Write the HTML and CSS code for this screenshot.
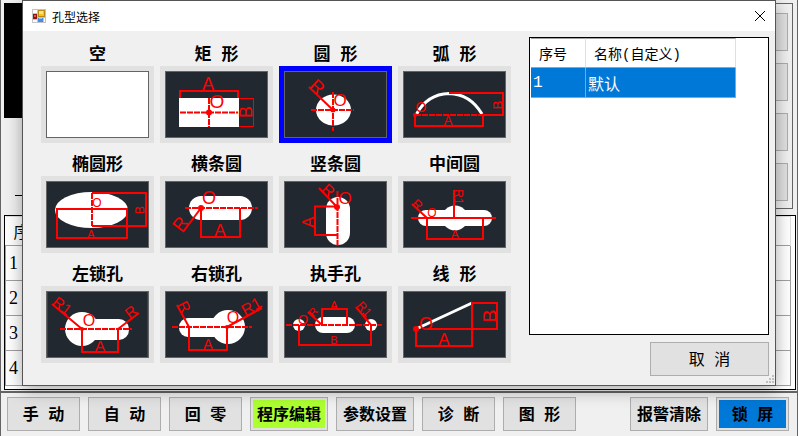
FILE: index.html
```html
<!DOCTYPE html>
<html lang="zh-CN">

<head>
    <meta charset="UTF-8">
    <meta name="viewport" content="width=device-width, initial-scale=1.0">
    <title>孔型选择</title>
    <link rel="stylesheet" href="styles.css">
</head>

<body>
    <div class="window">
        <div class="workspace">
            <div class="preview">
                <div class="canvas"></div>
                <div class="rule"></div>
            </div>
            <div class="side-panel">
                <button type="button"></button>
                <button type="button"></button>
                <button type="button"></button>
                <button type="button"></button>
            </div>
        </div>

        <div class="program">
            <table class="program-table">
                <thead>
                    <tr><th>序号</th><th></th></tr>
                </thead>
                <tbody>
                    <tr><td>1</td><td></td></tr>
                    <tr><td>2</td><td></td></tr>
                    <tr><td>3</td><td></td></tr>
                    <tr><td>4</td><td></td></tr>
                </tbody>
            </table>
        </div>

        <div class="toolbar">
            <button type="button">手 动</button>
            <button type="button">自 动</button>
            <button type="button">回 零</button>
            <button type="button" class="wide active">程序编辑</button>
            <button type="button" class="wide">参数设置</button>
            <button type="button">诊 断</button>
            <button type="button">图 形</button>
            <button type="button" class="wide push">报警清除</button>
            <button type="button" class="lock">锁 屏</button>
        </div>
    </div>

    <div class="dialog" role="dialog" aria-labelledby="dialog-title">
        <div class="titlebar">
            <svg class="app-icon" width="14" height="14" viewBox="0 0 14 14">
                <rect width="14" height="14" fill="#c4c4c4" />
                <path d="M1 1h4v3H1zM1 11h4v2H1zM12 9h1v4h-1z" fill="#fff" />
                <rect x="6" y="1" width="7" height="7" fill="#b98a12" />
                <rect x="7" y="2" width="5" height="5" fill="#f5c22b" />
                <rect x="7" y="2" width="4" height="3" fill="#ffe385" />
                <rect x="1" y="5" width="4" height="5" fill="#8c1710" />
                <rect x="2" y="6" width="2" height="2" fill="#e0574a" />
                <rect x="6" y="9" width="5" height="4" fill="#4c8ae0" />
                <rect x="7" y="9" width="3" height="1" fill="#9cc3f7" />
            </svg>
            <span id="dialog-title">孔型选择</span>
            <button type="button" class="close" aria-label="关闭">
                <svg width="12" height="12" viewBox="0 0 12 12">
                    <path d="M1 1l10 10M11 1L1 11" fill="none" stroke="#000" />
                </svg>
            </button>
        </div>

        <div class="dialog-body">
            <div class="shapes">
                <div class="shape">
                    <span id="shape-none">空</span>
                    <button type="button" class="blank" aria-labelledby="shape-none">
                        <svg viewBox="0 0 103 67"></svg>
                    </button>
                </div>

                <div class="shape">
                    <span id="shape-rect">矩 形</span>
                    <button type="button" aria-labelledby="shape-rect">
                        <svg viewBox="0 0 103 67">
                            <rect class="hole" x="14" y="27" width="60" height="29" />
                            <path class="dim" d="M15 27V20H73V27" />
                            <path class="dim thin" d="M74 27.500H88.500V55.500H74" />
                            <path class="axis" d="M15 41.500H73M44 27V56" />
                            <circle class="dot" cx="44" cy="41.500" r="3" />
                            <text font-size="18" x="43" y="19">A</text>
                            <text font-size="19" x="52" y="37">O</text>
                            <text font-size="18" transform="translate(81 41) rotate(-90)" y="6">B</text>
                        </svg>
                    </button>
                </div>

                <div class="shape">
                    <span id="shape-circle">圆 形</span>
                    <button type="button" class="selected" aria-labelledby="shape-circle">
                        <svg viewBox="0 0 103 67">
                            <ellipse class="hole" cx="49.500" cy="39" rx="17.500" ry="15.500" />
                            <path class="dim" d="M25 16L49 39" />
                            <path class="axis" d="M27 39H70M49 21V60" />
                            <circle class="dot" cx="49" cy="39" r="2.500" />
                            <text font-size="18" transform="translate(33 16) rotate(43)" y="6">R</text>
                            <text font-size="17" x="56" y="35">O</text>
                        </svg>
                    </button>
                </div>

                <div class="shape">
                    <span id="shape-arc">弧 形</span>
                    <button type="button" aria-labelledby="shape-arc">
                        <svg viewBox="0 0 103 67">
                            <path class="stroke" d="M13 44Q24 23 46 22.500Q67 23 79 43" />
                            <path class="dim" d="M46 22H100V44H79M12 44V55H80V44" />
                            <path class="axis" d="M12 44H80" />
                            <circle class="dot" cx="12" cy="44" r="2" />
                            <text font-size="13" x="45" y="54">A</text>
                            <text font-size="14" x="18" y="41">O</text>
                            <text font-size="13" transform="translate(94 34) rotate(-90)" y="5">B</text>
                        </svg>
                    </button>
                </div>

                <div class="shape">
                    <span id="shape-ellipse">椭圆形</span>
                    <button type="button" aria-labelledby="shape-ellipse">
                        <svg viewBox="0 0 103 67">
                            <ellipse class="hole" cx="45.500" cy="29" rx="36.500" ry="18" />
                            <path class="dim" d="M11 28V57H81V28ZM46 12H100V45H46" />
                            <path class="axis" d="M46 12V45" />
                            <text font-size="11" x="45" y="57">A</text>
                            <text font-size="12" x="51" y="26">O</text>
                            <text font-size="12" transform="translate(94 29) rotate(-90)" y="4">B</text>
                        </svg>
                    </button>
                </div>

                <div class="shape">
                    <span id="shape-slot-h">横条圆</span>
                    <button type="button" aria-labelledby="shape-slot-h">
                        <svg viewBox="0 0 103 67">
                            <rect class="hole" x="24" y="15" width="63" height="24" rx="12" />
                            <path class="dim" d="M36 27V56H75V27M36 27L18 51" />
                            <path class="axis" d="M20 27H93" />
                            <circle class="dot" cx="36" cy="27" r="3" />
                            <text font-size="17" x="55" y="55">A</text>
                            <text font-size="18" x="44" y="23">O</text>
                            <text font-size="18" transform="translate(15 43) rotate(-53)" y="6">R</text>
                        </svg>
                    </button>
                </div>

                <div class="shape">
                    <span id="shape-slot-v">竖条圆</span>
                    <button type="button" aria-labelledby="shape-slot-v">
                        <svg viewBox="0 0 103 67">
                            <rect class="hole" x="42" y="16" width="24" height="48" rx="12" />
                            <path class="dim" d="M53 25.500H31V54H53M35 7L53 26" />
                            <path class="axis" d="M53.500 10V66" />
                            <circle class="dot" cx="53" cy="26" r="3" />
                            <text font-size="16" transform="translate(44 10) rotate(42)" y="5">R</text>
                            <text font-size="17" x="61" y="23">O</text>
                            <text font-size="17" transform="translate(24 41) rotate(-90)" y="6">A</text>
                        </svg>
                    </button>
                </div>

                <div class="shape">
                    <span id="shape-mid">中间圆</span>
                    <button type="button" aria-labelledby="shape-mid">
                        <svg viewBox="0 0 103 67">
                            <rect class="hole" x="15" y="29" width="74" height="16" rx="8" />
                            <ellipse class="hole" cx="52" cy="37" rx="13" ry="12.500" />
                            <path class="dim" d="M24 37V58H80V37M9 23L24 37M51 9V37M8 37H93" />
                            <text font-size="11" x="52" y="57">A</text>
                            <text font-size="12" x="29" y="36">O</text>
                            <text font-size="13" transform="translate(14 24) rotate(43)" y="4">R</text>
                            <text font-size="12" transform="translate(55 16) rotate(90)" y="4">R1</text>
                        </svg>
                    </button>
                </div>

                <div class="shape">
                    <span id="shape-lock-l">左锁孔</span>
                    <button type="button" aria-labelledby="shape-lock-l">
                        <svg viewBox="0 0 103 67">
                            <path class="edge" d="M1.500 1V66M101.500 1V66" />
                            <circle class="hole" cx="36" cy="38" r="17" />
                            <rect class="hole" x="36" y="28" width="47" height="21" rx="10" />
                            <path class="dim" d="M36 38V61H72V38M6 13L36 38M72 38L93 22" />
                            <path class="axis" d="M14 38H86" />
                            <circle class="dot" cx="36" cy="38" r="2" />
                            <text font-size="15" x="54" y="60">A</text>
                            <text font-size="16" x="43" y="35">O</text>
                            <text font-size="15" transform="translate(16 15) rotate(38)" y="5">R1</text>
                            <text font-size="15" transform="translate(85 21) rotate(-38)" y="5">R</text>
                        </svg>
                    </button>
                </div>

                <div class="shape">
                    <span id="shape-lock-r">右锁孔</span>
                    <button type="button" aria-labelledby="shape-lock-r">
                        <svg viewBox="0 0 103 67">
                            <rect class="hole" x="14" y="27" width="48" height="19" rx="9" />
                            <circle class="hole" cx="63" cy="36" r="17" />
                            <path class="dim" d="M24 36V59H62V36M12 14L24 36M62 36L97 17" />
                            <path class="axis" d="M7 36H87" />
                            <circle class="dot" cx="62" cy="36" r="2" />
                            <text font-size="14" x="43" y="58">A</text>
                            <text font-size="16" x="68" y="32">O</text>
                            <text font-size="15" transform="translate(19 16) rotate(62)" y="5">R</text>
                            <text font-size="16" transform="translate(86 15) rotate(-29)" y="6">R1</text>
                        </svg>
                    </button>
                </div>

                <div class="shape">
                    <span id="shape-handle">执手孔</span>
                    <button type="button" aria-labelledby="shape-handle">
                        <svg viewBox="0 0 103 67">
                            <circle class="hole" cx="15" cy="34" r="6" />
                            <circle class="hole" cx="87" cy="34" r="6" />
                            <rect class="hole" x="31" y="26" width="40" height="16" rx="8" />
                            <path class="dim" d="M38 34V18H63V34M15 34V54H87V34M24 21L38 34M72 16L87 34" />
                            <path class="axis" d="M2 34H98" />
                            <text font-size="11" x="50" y="18">A</text>
                            <text font-size="11" x="50" y="53">B</text>
                            <text font-size="13" x="19" y="33">O</text>
                            <text font-size="11" transform="translate(29 21) rotate(-50)" y="4">R</text>
                            <text font-size="12" transform="translate(80 18) rotate(48)" y="4">R1</text>
                        </svg>
                    </button>
                </div>

                <div class="shape">
                    <span id="shape-line">线 形</span>
                    <button type="button" aria-labelledby="shape-line">
                        <svg viewBox="0 0 103 67">
                            <path class="stroke" d="M13 38L69 12" />
                            <path class="dim" d="M13 38V55H69V12H94V38H24" />
                            <circle class="dot" cx="13" cy="38" r="3" />
                            <text font-size="17" x="41" y="54">A</text>
                            <text font-size="18" x="23" y="39">O</text>
                            <text font-size="19" transform="translate(86 25) rotate(-90)" y="7">B</text>
                        </svg>
                    </button>
                </div>
            </div>

            <div class="names">
                <div class="name-list">
                    <table>
                        <thead>
                            <tr><th>序号</th><th>名称(自定义)</th></tr>
                        </thead>
                        <tbody>
                            <tr><td>1</td><td>默认</td></tr>
                        </tbody>
                    </table>
                </div>
                <button type="button" class="cancel">取 消</button>
            </div>
        </div>

        <svg class="grip" width="9" height="9" viewBox="0 0 9 9">
            <path d="M7 0h2v2H7zM7 3h2v2H7zM4 3h2v2H4zM7 6h2v2H7zM4 6h2v2H4zM1 6h2v2H1z" fill="#bfbfbf" />
        </svg>
    </div>
</body>

</html>
```
FILE: styles.css
```css
:root {
    --face: #f0f0f0;
    --button: #e1e1e1;
    --button-border: #adadad;
    --frame: #646464;
    --accent: #0078d7;
    --grid: #a0a0a0;
}

* {
    box-sizing: border-box;
}

body {
    margin: 0;
    background-color: var(--face);
    color: #000;
    font-family: "Liberation Mono", "Noto Sans CJK SC", monospace;
    font-size: 16px;
}

button {
    margin: 0;
    padding: 0;
    border: 1px solid var(--button-border);
    background-color: var(--button);
    color: #000;
    font: inherit;
}

table {
    border-collapse: collapse;
}

/* main window */
.window {
    display: flex;
    flex-direction: column;
    min-height: 100vh;
    border: solid var(--frame);
    border-width: 0 1px;
}

.workspace {
    display: flex;
    justify-content: space-between;
    padding: 3px 4px 6px 3px;
}

.preview {
    width: 60%;
}

.canvas {
    height: 115px;
    background-color: #000;
}

.rule {
    margin: 77px 0 0 11px;
    border-top: 1px solid #000;
}

.side-panel {
    display: flex;
    flex-direction: column;
    gap: 12px;
    width: 130px;
    padding: 9px 4px 7px;
    border: 1px solid var(--frame);
}

.side-panel button {
    height: 38px;
}

.program {
    margin: 0 1px 1px 3px;
    padding-right: 4px;
    padding-bottom: 3px;
    border: 1px solid #000;
    background-color: #fff;
}

.program-table {
    width: 100%;
}

.program-table th {
    height: 29px;
    padding: 0 8px;
    border-right: 1px solid #e0e0e0;
    border-top: 1px solid #e0e0e0;
    font-size: 16px;
    font-weight: normal;
    text-align: left;
}

.program-table td {
    height: 35px;
    padding: 0 3px;
    border: 1px solid var(--grid);
    font-family: "Liberation Serif", serif;
    font-size: 18px;
}

.program-table th:first-child {
    width: 80px;
}

.toolbar {
    display: flex;
    flex: 1;
    align-items: flex-start;
    gap: 8px;
    padding: 4px 8px 5px 6px;
    border-top: 2px solid var(--frame);
}

.toolbar button {
    width: 73px;
    height: 34px;
    padding: 0 2px 2px;
    font-weight: bold;
    white-space: nowrap;
}

.toolbar .wide {
    width: 78px;
}

.toolbar .push {
    margin-left: auto;
}

.toolbar .active {
    background-color: #adff2f;
    box-shadow: inset 0 0 0 2px var(--button);
}

.toolbar .lock {
    background-color: var(--accent);
    box-shadow: inset 0 0 0 2px var(--button);
}

/* dialog */
.dialog {
    position: absolute;
    top: 0;
    left: 22px;
    right: 22px;
    border: 1px solid #555;
    background-color: var(--face);
    box-shadow: 0 4px 16px rgba(0, 0, 0, 0.35);
}

.titlebar {
    display: flex;
    align-items: center;
    height: 30px;
    padding: 0 9px;
    background-color: #fff;
    font-family: "Noto Sans CJK SC", sans-serif;
    font-size: 12px;
}

.app-icon {
    margin-right: 6px;
}

.close {
    display: flex;
    margin-left: auto;
    border: 0;
    background: none;
}

.dialog-body {
    display: flex;
    gap: 18px;
    padding: 6px 6px 9px 18px;
}

.shapes {
    display: grid;
    grid-template-columns: repeat(4, 113px);
    align-content: start;
    gap: 13px 6px;
    padding-top: 9px;
}

.shape {
    display: flex;
    flex-direction: column;
    text-align: center;
}

.shape span {
    font-size: 17px;
    font-weight: bold;
    line-height: 20px;
}

.shape button {
    height: 77px;
    padding: 5px;
    border: 0;
}

.shape button.selected {
    background-color: #00f;
}

.shape svg {
    display: block;
    width: 103px;
    height: 67px;
    background-color: #222830;
    outline: 1px solid var(--frame);
    outline-offset: -1px;
}

.shape .blank svg {
    background-color: #fff;
}

.hole {
    fill: #fff;
}

.stroke {
    fill: none;
    stroke: #fff;
    stroke-width: 3;
}

.dim,
.axis {
    fill: none;
    stroke: #f00;
    stroke-width: 2;
}

.dim.thin {
    stroke-width: 1;
}

.axis {
    stroke-dasharray: 6 1;
}

.edge {
    stroke: #8c1a1e;
}

.dot {
    fill: #f00;
}

.shape text {
    fill: #f00;
    font-family: "Liberation Sans", sans-serif;
    font-weight: normal;
    text-anchor: middle;
}

.names {
    display: flex;
    flex: 1;
    flex-direction: column;
    gap: 7px;
}

.name-list {
    height: 298px;
    padding-left: 1px;
    border: 1px solid #000;
    background-color: #fff;
}

.name-list table {
    width: 205px;
    border-collapse: separate;
    border-spacing: 0;
}

.name-list th {
    height: 30px;
    padding: 0 8px;
    border-top: 1px solid var(--grid);
    border-right: 1px solid #e0e0e0;
    border-bottom: 1px solid var(--grid);
    font-size: 14px;
    font-weight: normal;
    text-align: left;
}

.name-list th:first-child {
    width: 55px;
}

.name-list td {
    height: 30px;
    padding: 0 2px;
    border-right: 1px solid var(--grid);
    border-bottom: 1px solid var(--grid);
    background-color: var(--accent);
    color: #fff;
}

.cancel {
    align-self: flex-end;
    width: 119px;
    height: 34px;
    padding-bottom: 2px;
}

.grip {
    position: absolute;
    right: 1px;
    bottom: 1px;
}
```
